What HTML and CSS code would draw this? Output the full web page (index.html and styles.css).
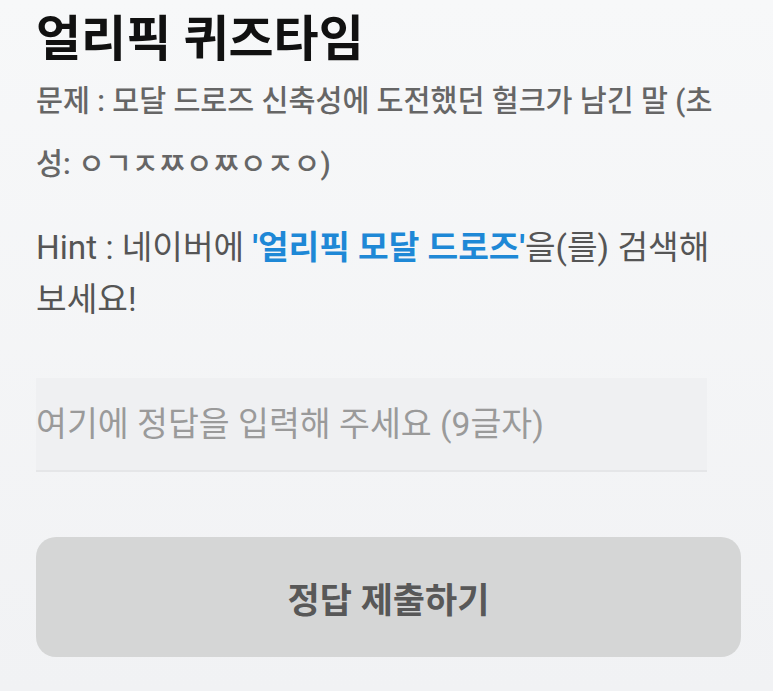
FILE: index.html
```html
<!DOCTYPE html>
<html lang="ko">
<head>
<meta charset="utf-8">
<title>얼리픽 퀴즈타임</title>
<link rel="stylesheet" href="styles.css">
</head>
<body>
<main class="quiz">
  <h1 class="quiz-title">얼리픽 퀴즈타임</h1>
  <p class="quiz-question">문제 : 모달 드로즈 신축성에 도전했던 헐크가 남긴 말 (초성: ㅇㄱㅈㅉㅇㅉㅇㅈㅇ)</p>
  <p class="quiz-hint">Hint : 네이버에 <strong class="hint-key">'얼리픽 모달 드로즈'</strong>을(를) 검색해 보세요!</p>
  <div class="answer-field">
    <input class="answer-input" type="text" placeholder="여기에 정답을 입력해 주세요 (9글자)">
  </div>
  <button class="submit-btn" type="button">정답 제출하기</button>
</main>
</body>
</html>
```

FILE: styles.css
```css
* { box-sizing: border-box; }
html, body { margin: 0; padding: 0; }
body {
  width: 773px;
  height: 691px;
  overflow: hidden;
  background: linear-gradient(#f7f8f9, #f1f2f4);
  font-family: Roboto, "Noto Sans CJK KR", sans-serif;
}
.quiz {
  padding: 10px 42px 0 36px;
  display: flex;
  flex-direction: column;
}
.quiz-title {
  margin: 0;
  font-size: 49px;
  line-height: 60px;
  font-weight: 700;
  color: #111;
}
.quiz-question {
  margin: 0;
  font-size: 29.3px;
  line-height: 63px;
  font-weight: 500;
  color: #666;
}
.quiz-hint {
  margin: 26px 0 0 0;
  font-size: 33.3px;
  line-height: 52px;
  font-weight: 400;
  color: #555;
}
.hint-key {
  color: #1e88d6;
  font-weight: 700;
}
.answer-field {
  margin-top: 52px;
  width: 671px;
  height: 94px;
  background: #eff0f2;
  border-bottom: 2px solid #e5e6e8;
  display: flex;
  align-items: center;
}
.answer-input {
  width: 100%;
  border: 0;
  background: transparent;
  padding: 0;
  font-family: inherit;
  font-size: 33.6px;
  color: #333;
  outline: none;
}
.answer-input::placeholder { color: #9a9a9a; }
.submit-btn {
  margin-top: 65px;
  width: 705px;
  height: 120px;
  border: 0;
  border-radius: 20px;
  background: #d5d6d6;
  font-family: inherit;
  font-size: 35px;
  font-weight: 700;
  color: #585858;
}
```
